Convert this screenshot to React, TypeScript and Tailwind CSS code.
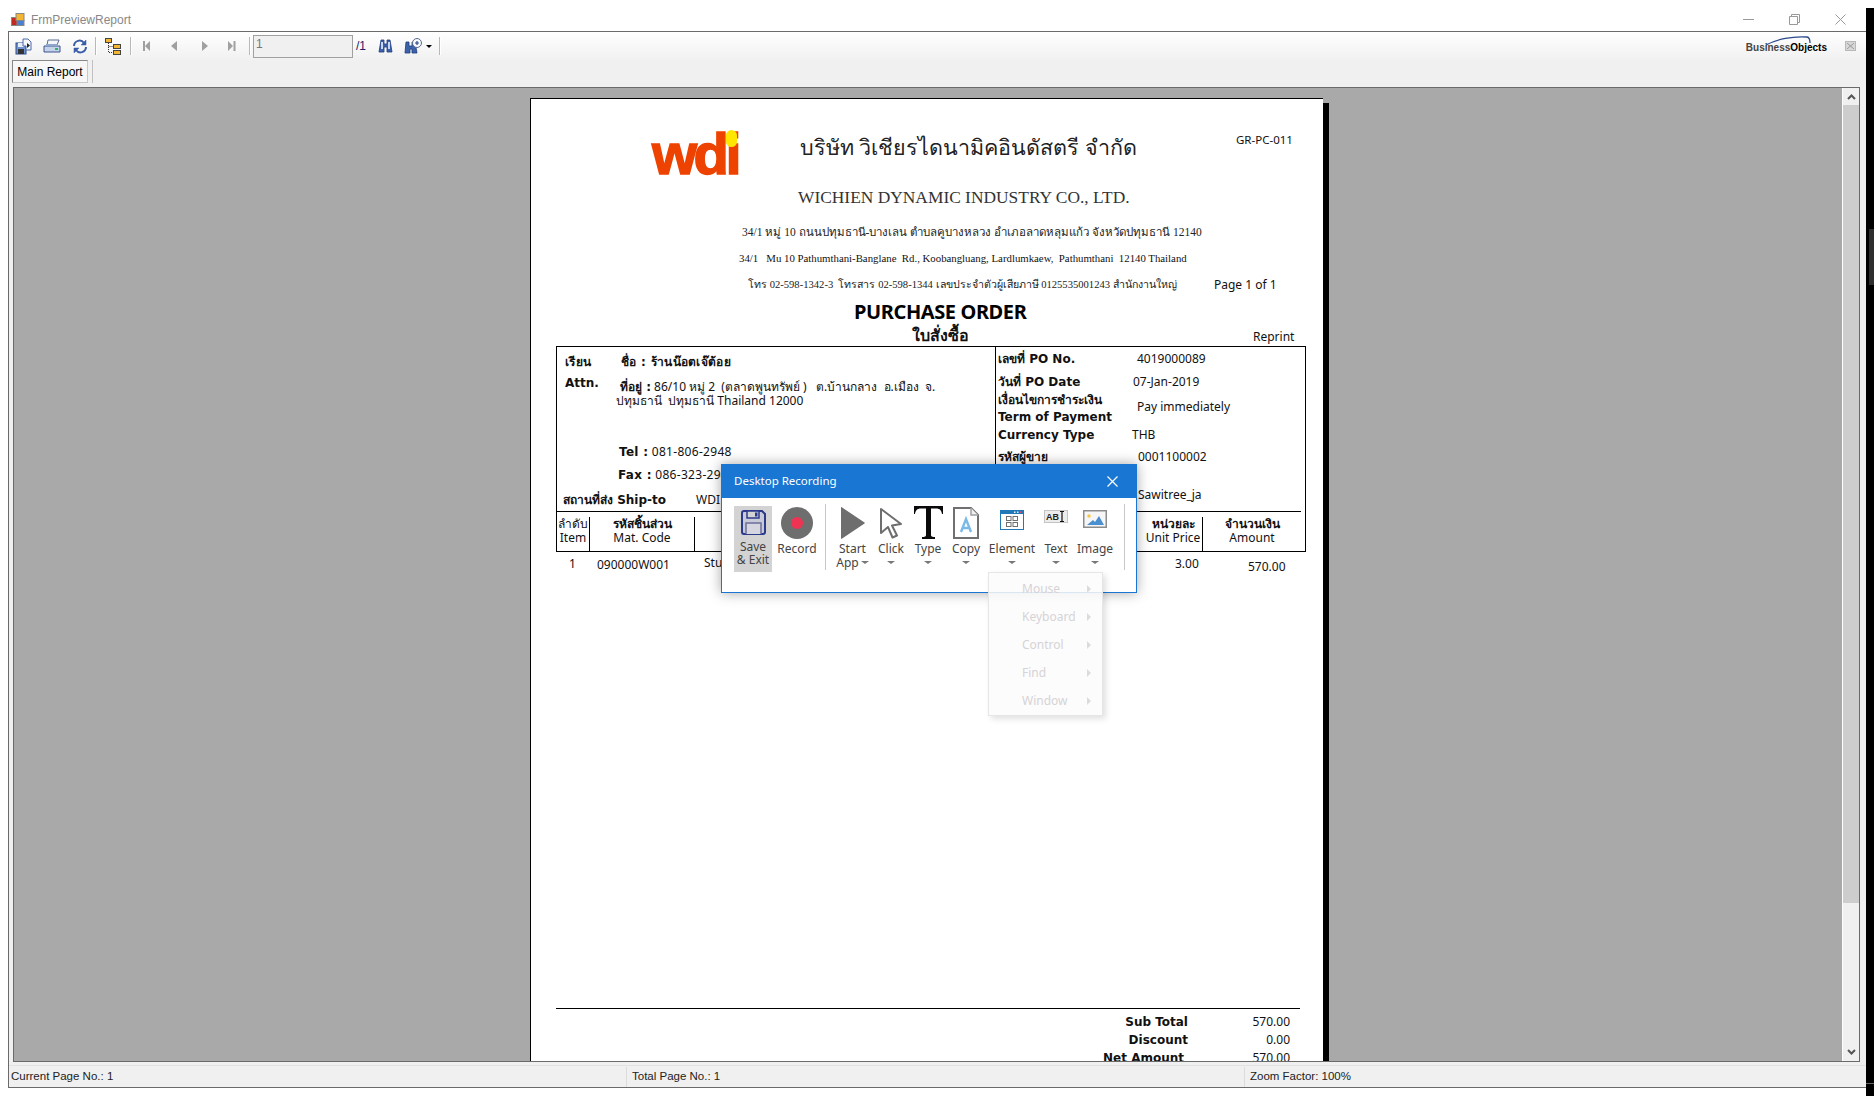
const uiFont = "font-['Liberation_Sans',sans-serif]";
const boldFont = "font-['DejaVu_Sans',sans-serif] font-bold text-[12px]";

function SaveIcon() {
  return (
    <svg width="17" height="17" viewBox="0 0 17 17">
      <rect x="1" y="5" width="10" height="11" fill="#6f93cf" stroke="#2a4a8c" />
      <rect x="3" y="5" width="6" height="4" fill="#e8eef8" />
      <rect x="3" y="11" width="6" height="5" fill="#333" />
      <path d="M8 1h5l3 3v8h-5V8H8z" fill="#f4f6fa" stroke="#4a6aa8" />
      <path d="M12 5l3 2.5-3 2.5z" fill="#222" />
    </svg>
  );
}

function PrintIcon() {
  return (
    <svg width="18" height="15" viewBox="0 0 18 15">
      <path d="M5 1h11l-2 5H4z" fill="#f4f6fa" stroke="#5a6a90" />
      <path d="M1 7h16v6H1z" fill="#c4d2ea" stroke="#3c5590" />
      <path d="M3 5h12v2H3z" fill="#8ea5cc" />
      <rect x="12" y="9" width="3" height="2" fill="#36b06a" />
    </svg>
  );
}

function RefreshIcon() {
  return (
    <svg width="16" height="15" viewBox="0 0 16 15" fill="none" stroke="#3a5fa8" strokeWidth="2">
      <path d="M2 7a5.500 5.500 0 0 1 10-3" />
      <path d="M14 8a5.500 5.500 0 0 1-10 3" />
      <path d="M14 1v5h-5z" fill="#3a5fa8" strokeWidth="0.500" />
      <path d="M2 14V9h5z" fill="#3a5fa8" strokeWidth="0.500" />
    </svg>
  );
}

function TreeIcon() {
  return (
    <svg width="16" height="17" viewBox="0 0 16 17">
      <rect x="0.500" y="0.500" width="6" height="4" fill="#f2b632" stroke="#444" />
      <rect x="8.500" y="6.500" width="7" height="4" fill="#f2b632" stroke="#444" />
      <rect x="8.500" y="12.500" width="7" height="4" fill="#f2b632" stroke="#444" />
      <path d="M3.500 5v9.500h5M3.500 8.500h5" fill="none" stroke="#333" strokeDasharray="1 1" />
    </svg>
  );
}

function NavIcon({ kind }: { kind: 'first' | 'prev' | 'next' | 'last' }) {
  return (
    <svg width="8" height="10" viewBox="0 0 8 10" fill="#a0a0a0">
      {kind === 'first' && <rect x="0" y="0" width="2" height="10" />}
      {kind === 'first' && <path d="M7 0v10L2 5z" />}
      {kind === 'prev' && <path d="M7 0v10L1 5z" />}
      {kind === 'next' && <path d="M1 0v10l6-5z" />}
      {kind === 'last' && <path d="M0 0v10l5-5z" />}
      {kind === 'last' && <rect x="5.500" y="0" width="2" height="10" />}
    </svg>
  );
}

function BinocularsIcon() {
  return (
    <svg width="15" height="14" viewBox="0 0 15 14">
      <path d="M3 1h3v4h3V1h3l2 12H9V8H6v5H1z" fill="#3c62ac" stroke="#1e3a78" strokeWidth="0.800" />
      <rect x="3" y="3" width="2" height="7" fill="#c6d6f0" />
      <rect x="10" y="3" width="2" height="7" fill="#c6d6f0" />
    </svg>
  );
}

function ZoomFindIcon() {
  return (
    <svg width="19" height="16" viewBox="0 0 19 16">
      <path d="M2 4h3v4h3V4h3l2 11H8v-4H6v4H1z" fill="#3c62ac" stroke="#1e3a78" strokeWidth="0.800" />
      <circle cx="13" cy="5" r="4.500" fill="#f6f8fc" stroke="#5a6a90" />
      <path d="M11 5h4M13 3v4" stroke="#2a4a8c" strokeWidth="1.200" />
    </svg>
  );
}

function ToolbarSep() {
  return <div className="w-px h-[18px] bg-[#b8b8b8] border-r border-white box-content" />;
}

function Caret() {
  return <div className="w-0 h-0 border-x-[4px] border-x-transparent border-t-[3px] border-t-[#777]" />;
}

function FloppyBig() {
  return (
    <svg width="25" height="25" viewBox="0 0 25 25" fill="none">
      <path d="M1 3a2 2 0 0 1 2-2h18l3 3v18a2 2 0 0 1-2 2H3a2 2 0 0 1-2-2z" stroke="#2d3a8c" strokeWidth="2" fill="#c9cad8" />
      <path d="M6 1h12v7H6z" stroke="#2d3a8c" strokeWidth="1.500" fill="#d3d3d3" />
      <rect x="14" y="2.500" width="2.500" height="4" fill="#2d3a8c" />
      <path d="M5 24V13h15v11" stroke="#6b6f9a" strokeWidth="1.500" fill="#d6d6e0" />
    </svg>
  );
}

function RecordBig() {
  return (
    <svg width="32" height="32" viewBox="0 0 32 32">
      <circle cx="16" cy="16" r="16" fill="#6e6e6e" />
      <circle cx="16" cy="16" r="6" fill="#ee3353" />
    </svg>
  );
}

function PlayBig() {
  return (
    <svg width="25" height="32" viewBox="0 0 25 32">
      <path d="M1 0.500c0-.5.400-.5.800-.2L24.500 15.600c.4.300.4.700 0 1L1.800 31.700c-.4.300-.8.200-.8-.2z" fill="#6e6e6e" />
    </svg>
  );
}

function CursorBig() {
  return (
    <svg width="24" height="32" viewBox="0 0 24 32">
      <path d="M2 2l20 15-9 1.500 5 10-4.500 2-4.500-10.500L2 26z" fill="#fff" stroke="#6e6e6e" strokeWidth="2" strokeLinejoin="round" />
    </svg>
  );
}

function TypeBig() {
  return (
    <svg width="29" height="33" viewBox="0 0 29 33">
      <path d="M0 0h29v8h-1c-.5-3.500-2-5.500-6-5.500h-5V29c0 1.500 1 2 4 2v2H8v-2c3 0 4-.5 4-2V2.500H7C3 2.500 1.500 4.500 1 8H0z" fill="#0a0a0a" />
    </svg>
  );
}

function CopyBig() {
  return (
    <svg width="26" height="32" viewBox="0 0 26 32">
      <path d="M1 1h17l7 7v23H1z" fill="#fff" stroke="#707070" strokeWidth="2" />
      <path d="M18 1v7h7" fill="#f0f0f0" stroke="#a0a0a0" strokeWidth="1.500" />
      <path d="M8 25l5-13 5 13M9.800 21h6.400" fill="none" stroke="#7ab9e8" strokeWidth="2.400" />
    </svg>
  );
}

function ElementBig() {
  return (
    <svg width="24" height="20" viewBox="0 0 24 20">
      <rect width="24" height="20" fill="#2178b8" />
      <rect x="1" y="4" width="22" height="15" fill="#fff" />
      <rect x="14" y="1.500" width="1.500" height="1.500" fill="#e8f0f8" />
      <rect x="17" y="1.500" width="1.500" height="1.500" fill="#e8f0f8" />
      <rect x="20" y="1.500" width="1.500" height="1.500" fill="#f04060" />
      <rect x="6.500" y="6.500" width="4.500" height="4" fill="none" stroke="#6e6e6e" />
      <rect x="13" y="6.500" width="4.500" height="4" fill="none" stroke="#6e6e6e" />
      <rect x="6.500" y="12.500" width="4.500" height="4" fill="none" stroke="#6e6e6e" />
      <rect x="13" y="12.500" width="4.500" height="4" fill="none" stroke="#6e6e6e" />
    </svg>
  );
}

function TextBig() {
  return (
    <svg width="24" height="13" viewBox="0 0 24 13">
      <rect width="24" height="13" fill="#c4c4c4" />
      <rect x="1" y="1" width="22" height="11" fill="#ececec" />
      <text x="2" y="10" fontSize="9" fontWeight="700" fontFamily="Liberation Sans, sans-serif" fill="#222">AB</text>
      <path d="M16 1.500h4M16 11.500h4M18 1.500v10" stroke="#111" strokeWidth="1.200" fill="none" />
    </svg>
  );
}

function ImageBig() {
  return (
    <svg width="24" height="18" viewBox="0 0 24 18">
      <rect x="0.750" y="0.750" width="22.500" height="16.500" fill="#f6f6f6" stroke="#8c8c8c" strokeWidth="1.500" />
      <circle cx="6" cy="6" r="1.800" fill="#f2c94c" />
      <path d="M4 15l6-5 2 2 4-6 5 9z" fill="#4a90d0" />
    </svg>
  );
}

const tools = [
  { label: 'Start', extra: 'App', w: 'w-[41px]', icon: <PlayBig />, h: 'pt-[1px]' },
  { label: 'Click', w: 'w-[36px]', icon: <CursorBig />, h: 'pt-[1px]' },
  { label: 'Type', w: 'w-[38px]', icon: <TypeBig />, h: 'pt-0' },
  { label: 'Copy', w: 'w-[38px]', icon: <CopyBig />, h: 'pt-[1px]' },
  { label: 'Element', w: 'w-[54px]', icon: <ElementBig />, h: 'pt-[4px]' },
  { label: 'Text', w: 'w-[34px]', icon: <TextBig />, h: 'pt-[4px]' },
  { label: 'Image', w: 'w-[44px]', icon: <ImageBig />, h: 'pt-[4px]' },
];

function DesktopRecording() {
  return (
    <div className="absolute left-[721px] top-[464px] w-[416px] h-[129px] bg-white border border-[#1976d2] shadow-[0_0_12px_rgba(0,0,0,0.35)] font-['Noto_Sans',sans-serif] text-[12px] text-[#444]">
      <div className="h-[33px] bg-[#1976d2] flex items-center justify-between pl-[12px] pr-[18px] pb-[1px] text-white">
        <span className="text-[11.5px]">Desktop Recording</span>
        <svg width="11" height="11" viewBox="0 0 11 11" stroke="#fff" strokeWidth="1.200"><path d="M0.500 0.500l10 10M10.500 0.500l-10 10" /></svg>
      </div>
      <div className="flex items-start pl-[12px] pt-[8px]">
        <div className="w-[38px] h-[66px] bg-[#d3d3d3] flex flex-col items-center pt-[4px]">
          <FloppyBig />
          <div className="mt-[5px] text-center leading-[13px]">Save<br />&amp; Exit</div>
        </div>
        <div className="w-[46px] flex flex-col items-center pt-[1px] ml-[2px]">
          <RecordBig />
          <div className="mt-[3px] leading-[14px]">Record</div>
        </div>
        <div className="w-px h-[66px] bg-[#c8c8c8] ml-[5px] mr-[6px] mt-[-2px]" />
        {tools.map((t) => (
          <div key={t.label} className={`${t.w} flex flex-col items-center`}>
            <div className={`h-[35px] ${t.h}`}>{t.icon}</div>
            <div className="leading-[14px] mt-[1px]">{t.label}</div>
            {t.extra ? (
              <div className="flex items-center gap-[2px] leading-[13px]">
                {t.extra}
                <Caret />
              </div>
            ) : (
              <div className="h-[13px] flex items-center">
                <Caret />
              </div>
            )}
          </div>
        ))}
        <div className="w-px h-[66px] bg-[#c8c8c8] ml-[7px] mt-[-2px]" />
      </div>
    </div>
  );
}

function FadedMenu() {
  const items = ['Mouse', 'Keyboard', 'Control', 'Find', 'Window'];
  return (
    <div className="absolute left-[988px] top-[572px] w-[115px] h-[144px] bg-[#fbfbfb]/85 border border-[#e6e6e6] shadow-[3px_3px_6px_rgba(0,0,0,0.12)] pt-[2px] font-['Noto_Sans',sans-serif] text-[12px] text-[#d6d3d6]">
      {items.map((item) => (
        <div key={item} className="h-[28px] flex items-center justify-between pl-[33px] pr-[11px]">
          <span>{item}</span>
          <div className="w-0 h-0 border-y-[4px] border-y-transparent border-l-[4px] border-l-[#dcdcdc]" />
        </div>
      ))}
    </div>
  );
}

function ReportHeader() {
  return (
    <>
      <div className="flex items-start pl-[121px] pt-[31px] h-[87px]">
        <div className="w-[148px] relative">
          <span className="block w-[90px] font-['Liberation_Sans',sans-serif] font-bold text-[58px] leading-[48px] tracking-[-3.5px] text-[#ee4300] [-webkit-text-stroke:1.5px_#ee4300]">wdi</span>
          <div className="absolute left-[74px] top-0 w-[11px] h-[17px] rounded-full bg-[#ffe600]" />
        </div>
        <div className="w-[436px] font-['Liberation_Serif',serif] text-[21.5px] leading-[36px] text-[#222] whitespace-nowrap">บริษัท วิเชียรไดนามิคอินดัสตรี จำกัด</div>
        <div className="text-[11.5px] leading-[20px]">GR-PC-011</div>
      </div>
      <div className="pl-[267px] h-[22px] leading-[22px] font-['Liberation_Serif',serif] text-[17.4px] text-[#333] whitespace-nowrap">WICHIEN DYNAMIC INDUSTRY CO., LTD.</div>
      <div className="pl-[211px] mt-[14px] h-[20px] leading-[20px] font-['Liberation_Serif',serif] text-[11.5px] text-[#222] whitespace-nowrap">34/1 หมู่ 10 ถนนปทุมธานี-บางเลน ตำบลคูบางหลวง อำเภอลาดหลุมแก้ว จังหวัดปทุมธานี 12140</div>
      <div className="pl-[208px] mt-[6px] h-[20px] leading-[20px] font-['Liberation_Serif',serif] text-[10.8px] text-[#111] whitespace-nowrap">34/1&nbsp;&nbsp; Mu 10 Pathumthani-Banglane&nbsp; Rd., Koobangluang, Lardlumkaew,&nbsp; Pathumthani&nbsp; 12140 Thailand</div>
      <div className="flex pl-[217px] mt-[7px] h-[20px] leading-[20px] whitespace-nowrap">
        <span className="w-[466px] font-['Liberation_Serif',serif] text-[10.6px] text-[#222]">โทร 02-598-1342-3&nbsp; โทรสาร 02-598-1344 เลขประจำตัวผู้เสียภาษี 0125535001243 สำนักงานใหญ่</span>
        <span className="text-[12px]">Page 1 of 1</span>
      </div>
      <div className="pl-[323px] mt-[5px] h-[24px] leading-[24px] font-bold text-[20px] tracking-[-0.4px] text-black whitespace-nowrap">PURCHASE ORDER</div>
      <div className="flex pl-[381px] h-[22px] leading-[22px]">
        <span className="w-[341px] font-bold text-[16px]">ใบสั่งซื้อ</span>
        <span className="text-[12px] pt-[2px]">Reprint</span>
      </div>
    </>
  );
}

function PartyBox() {
  return (
    <div className="ml-[25px] w-[750px] h-[206px] border border-black text-[12px] leading-[14px]">
      <div className="flex h-[164px]">
        <div className="w-[439px] border-r border-black">
          <div className={`flex h-[20px] mt-[5px] leading-[20px] pl-[8px] tracking-[0.3px] ${boldFont}`}>
            <span className="w-[56px]">เรียน</span>
            <span>ชื่อ : ร้านน๊อตเจ๊ต้อย</span>
          </div>
          <div className="flex pl-[8px] mt-[1px]">
            <span className={`w-[51px] leading-[20px] ${boldFont}`}>Attn.</span>
            <div className="pt-[7px]">
              <div className="pl-[4px] whitespace-nowrap"><b className={boldFont}>ที่อยู่ :</b> 86/10 หมู่ 2&nbsp; (ตลาดพูนทรัพย์ )&nbsp;&nbsp; ต.บ้านกลาง&nbsp; อ.เมือง&nbsp; จ.</div>
              <div className="whitespace-nowrap">ปทุมธานี&nbsp; ปทุมธานี Thailand 12000</div>
            </div>
          </div>
          <div className="pl-[62px] mt-[34px] leading-[20px] tracking-[0.3px]"><b className={boldFont}>Tel :</b> 081-806-2948</div>
          <div className="pl-[61px] mt-[3px] leading-[20px] tracking-[0.3px]"><b className={boldFont}>Fax :</b> 086-323-2948</div>
          <div className="flex pl-[6px] mt-[5px] leading-[20px]">
            <b className={`w-[133px] whitespace-nowrap ${boldFont}`}>สถานที่ส่ง Ship-to</b>
            <span>WDI</span>
          </div>
        </div>
        <div className="flex-1 pl-[2px] pt-[2px]">
          <div className="flex h-[20px] leading-[20px]"><b className={`w-[139px] ${boldFont}`}>เลขที่ PO No.</b><span>4019000089</span></div>
          <div className="flex h-[20px] mt-[3px] leading-[20px]"><b className={`w-[135px] ${boldFont}`}>วันที่ PO Date</b><span>07-Jan-2019</span></div>
          <div className="flex h-[34px]">
            <b className={`w-[139px] leading-[17px] whitespace-nowrap ${boldFont}`}>เงื่อนไขการชำระเงิน<br />Term of Payment</b>
            <span className="leading-[30px]">Pay immediately</span>
          </div>
          <div className="flex h-[18px] leading-[18px]"><b className={`w-[134px] ${boldFont}`}>Currency Type</b><span>THB</span></div>
          <div className="flex h-[20px] mt-[3px] leading-[20px]"><b className={`w-[140px] ${boldFont}`}>รหัสผู้ขาย</b><span>0001100002</span></div>
          <div className="h-[20px] mt-[18px] pl-[140px] leading-[20px]">Sawitree_ja</div>
        </div>
      </div>
      <div className="flex w-[744px] h-[40px] border-t border-black text-center leading-[14px] pt-[5px]">
        <div className="w-[33px] border-r border-black h-[35px]">ลำดับ<br />Item</div>
        <div className="w-[105px] border-r border-black h-[35px]"><b className={boldFont}>รหัสชิ้นส่วน</b><br />Mat. Code</div>
        <div className="w-[449px]" />
        <div className="w-[59px] border-r border-black h-[35px]"><b className={boldFont}>หน่วยละ</b><br />Unit Price</div>
        <div className="flex-1"><b className={boldFont}>จำนวนเงิน</b><br />Amount</div>
      </div>
    </div>
  );
}

function ReportPage() {
  return (
    <div className="w-[793px] h-[1200px] shrink-0 bg-white border-l border-t border-black font-['Noto_Sans',sans-serif] text-[#111]">
      <ReportHeader />
      <PartyBox />
      <div className="flex pl-[38px] h-[24px] text-[12px] leading-[16px]">
        <span className="w-[28px] pt-[4px]">1</span>
        <span className="w-[107px] pt-[5px]">090000W001</span>
        <span className="w-[471px] pt-[3px]">Stud Bolt</span>
        <span className="w-[73px] pt-[4px]">3.00</span>
        <span className="pt-[7px]">570.00</span>
      </div>
      <div className="ml-[25px] mt-[432px] w-[744px] h-px bg-black" />
      <div className="pt-[4px] text-[12px] leading-[18px]">
        <div className="flex"><b className={`w-[657px] text-right ${boldFont}`}>Sub Total</b><span className="w-[102px] text-right">570.00</span></div>
        <div className="flex"><b className={`w-[657px] text-right ${boldFont}`}>Discount</b><span className="w-[102px] text-right">0.00</span></div>
        <div className="flex"><b className={`w-[653px] text-right ${boldFont}`}>Net Amount</b><span className="w-[106px] text-right">570.00</span></div>
      </div>
    </div>
  );
}

function Toolbar() {
  return (
    <div className="h-[28px] flex items-center pl-[6px] pr-[10px] relative">
      <div className="flex items-center justify-center w-[17px]"><SaveIcon /></div>
      <div className="flex items-center justify-center w-[18px] ml-[11px]"><PrintIcon /></div>
      <div className="flex items-center justify-center w-[16px] ml-[11px]"><RefreshIcon /></div>
      <div className="ml-[7px]"><ToolbarSep /></div>
      <div className="ml-[8px]"><TreeIcon /></div>
      <div className="ml-[9px]"><ToolbarSep /></div>
      <div className="ml-[11px]"><NavIcon kind="first" /></div>
      <div className="ml-[19px]"><NavIcon kind="prev" /></div>
      <div className="ml-[23px]"><NavIcon kind="next" /></div>
      <div className="ml-[19px]"><NavIcon kind="last" /></div>
      <div className="ml-[13px]"><ToolbarSep /></div>
      <div className="ml-[2px] w-[100px] h-[23px] border border-[#a0a0a0] bg-[#f0f0f0] text-[12px] leading-[14px] pl-[2px] pt-[1px] text-[#777]">1</div>
      <span className="ml-[3px] text-[12px] text-[#20206a]">/1</span>
      <div className="ml-[12px]"><BinocularsIcon /></div>
      <div className="ml-[11px]"><ZoomFindIcon /></div>
      <div className="ml-[3px] w-0 h-0 border-x-[3px] border-x-transparent border-t-[3px] border-t-black" />
      <div className="ml-[7px]"><ToolbarSep /></div>
      <div className="ml-auto mr-[18px] relative w-[84px] h-[18px] text-[10px] font-bold leading-[12px] pt-[5px] text-right whitespace-nowrap">
        <svg className="absolute left-[22px] top-[-1px]" width="46" height="10" viewBox="0 0 46 10" fill="none">
          <path d="M1 9C12 3 28 0 42 1c2 .3 3 2 3 6" stroke="#2b4a8c" strokeWidth="1.300" />
        </svg>
        <span className="text-[#444]">Business</span><span className="text-black">Objects</span>
      </div>
      <div className="w-[11px] h-[10px] bg-[#d8d8d8] border border-[#b8b8b8] flex items-center justify-center">
        <svg width="7" height="6" viewBox="0 0 7 6" stroke="#999"><path d="M0 0l7 6M7 0L0 6" /></svg>
      </div>
    </div>
  );
}

export default function App() {
  return (
    <div className={`relative w-[1874px] h-[1096px] overflow-hidden bg-white flex ${uiFont}`}>
      <div className="w-[1866px] h-full flex flex-col shrink-0">
        <div className="h-[31px] flex items-center pt-[8px] pl-[11px] pr-[20px] text-[12px] text-[#888]">
          <svg width="14" height="14" viewBox="0 0 14 14">
            <rect x="0.500" y="4.500" width="6" height="8" fill="#c02a20" stroke="#888" />
            <rect x="5" y="0.500" width="8" height="7" fill="#f2b632" stroke="#888" />
            <rect x="6" y="7.500" width="7" height="5" fill="#4a80d0" stroke="#888" />
          </svg>
          <span className="ml-[6px] text-[12px]">FrmPreviewReport</span>
          <div className="ml-auto flex items-center gap-[35px]">
            <div className="w-[11px] h-px bg-[#999]" />
            <svg width="11" height="11" viewBox="0 0 11 11" fill="none" stroke="#999"><path d="M0.500 2.500h8v8h-8zM2.500 2.500v-2h8v8h-2" /></svg>
            <svg width="11" height="11" viewBox="0 0 11 11" fill="none" stroke="#999"><path d="M0.500 0.500l10 10M10.500 0.500l-10 10" /></svg>
          </div>
        </div>

        <div className="ml-[8px] h-[1057px] border-l border-t border-b border-[#6a6a6a] bg-gradient-to-b from-white to-[#f0f0f0] to-[30px] flex flex-col">
          <Toolbar />
          <div className="h-[27px] flex items-start pl-[3px]">
            <div className="w-[76px] h-[23px] border border-[#c8c8c8] border-l-[#888] border-t-[#888] bg-[#f7f7f7] text-[12px] text-black leading-[22px] text-center">Main Report</div>
            <div className="ml-[4px] w-px h-[23px] bg-[#c0c0c0]" />
          </div>
          <div className="ml-[4px] w-[1847px] h-[975px] border border-[#6a6a6a] flex overflow-hidden">
            <div className="flex-1 bg-[#a9a9a9] overflow-hidden flex items-start pl-[516px] pt-[10px]">
              <ReportPage />
              <div className="w-[6px] h-[1200px] mt-[5px] bg-black shrink-0" />
            </div>
            <div className="w-[17px] bg-[#f0f0f0] flex flex-col items-center border-l border-white">
              <svg className="mt-[6px]" width="9" height="6" viewBox="0 0 9 6" fill="none" stroke="#555" strokeWidth="2"><path d="M1 5l3.500-3.500L8 5" /></svg>
              <div className="mt-[5px] w-full h-[798px] bg-[#cdcdcd]" />
              <svg className="mt-auto mb-[6px]" width="9" height="6" viewBox="0 0 9 6" fill="none" stroke="#555" strokeWidth="2"><path d="M1 1l3.500 3.500L8 1" /></svg>
            </div>
          </div>
          <div className="mt-[3px] flex-1 border-t border-[#e2e2e2] flex items-center pt-[1px] text-[11.5px] text-[#222]">
            <div className="w-[617px] pl-[2px]">Current Page No.: 1</div>
            <div className="w-[618px] h-full border-l border-[#dcdcdc] pl-[5px] flex items-center">Total Page No.: 1</div>
            <div className="flex-1 h-full border-l border-[#dcdcdc] pl-[5px] flex items-center">Zoom Factor: 100%</div>
          </div>
        </div>
      </div>
      <div className="flex-1 flex flex-col bg-black">
        <div className="h-[8px] shrink-0 bg-white" />
        <div className="h-[221px] shrink-0" />
        <div className="h-[56px] shrink-0 bg-[#2e2e2e] border-l-[3px] border-l-black" />
        <div className="h-[798px] shrink-0" />
        <div className="h-px shrink-0 bg-[#666]" />
      </div>

      <DesktopRecording />
      <FadedMenu />
    </div>
  );
}
